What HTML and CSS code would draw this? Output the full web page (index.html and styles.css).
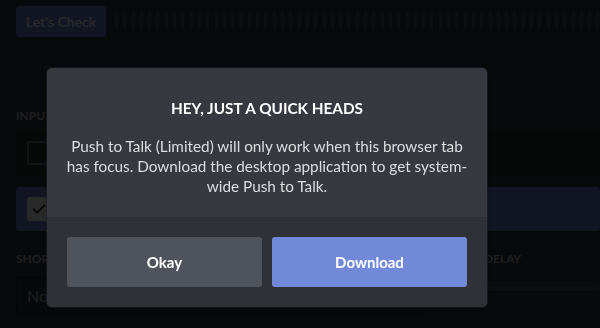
FILE: index.html
```html
<!DOCTYPE html>
<html lang="en">
<head>
<meta charset="utf-8">
<title>Voice Settings</title>
<link rel="stylesheet" href="styles.css">
</head>
<body>
<div class="page">
  <div class="top-row">
    <button class="check-btn">Let's Check</button>
    <div class="meter"></div>
  </div>
  <div class="section-label input-label">Input Mode</div>
  <div class="radio-row">
    <span class="checkbox"></span>
  </div>
  <div class="radio-row selected">
    <span class="checkbox checked">
      <svg viewBox="0 0 24 24" width="18" height="18"><path d="M5 12.5l4.5 4.5L19 7.5" fill="none" stroke="#2f3136" stroke-width="2.6" stroke-linecap="round" stroke-linejoin="round"/></svg>
    </span>
  </div>
  <div class="cols">
    <div class="col">
      <div class="section-label">Shortcut</div>
      <div class="shortcut-box">No Keybind Set</div>
    </div>
    <div class="col">
      <div class="section-label">Input Delay</div>
      <div class="slider-track"></div>
    </div>
  </div>
</div>

<div class="overlay">
  <div class="modal">
    <div class="modal-body">
      <h2 class="modal-title">Hey, just a quick heads</h2>
      <p class="modal-text">Push to Talk (Limited) will only work when this browser tab has focus. Download the desktop application to get system-wide Push to Talk.</p>
    </div>
    <div class="modal-footer">
      <button class="btn btn-okay">Okay</button>
      <button class="btn btn-download">Download</button>
    </div>
  </div>
</div>
</body>
</html>
```

FILE: styles.css
```css
html, body {
  margin: 0;
  padding: 0;
  height: 100%;
  overflow: hidden;
}
body {
  background: #36393f;
  font-family: Lato, "Noto Sans", "Liberation Sans", sans-serif;
  color: #dcddde;
}
.page {
  padding: 6px 0 0 16px;
}
.top-row {
  display: flex;
  align-items: center;
  gap: 9px;
}
.check-btn {
  width: 90px;
  height: 31px;
  border: none;
  border-radius: 3px;
  background: #7289da;
  color: #fff;
  font-family: inherit;
  font-size: 14px;
  font-weight: 600;
  padding: 0;
}
.meter {
  flex: 1;
  height: 17px;
  background: repeating-linear-gradient(90deg, #4f545c 0 3px, transparent 3px 8.3px);
}
.section-label {
  font-size: 12px;
  font-weight: 700;
  text-transform: uppercase;
  color: #b9bbbe;
  line-height: 16px;
}
.input-label {
  margin-top: 71px;
  margin-bottom: 7px;
}
.radio-row {
  display: flex;
  align-items: center;
  height: 44px;
  padding: 0 11px;
  border-radius: 3px;
  background: #2f3136;
  margin-bottom: 12px;
}
.radio-row.selected {
  background: #7289da;
}
.checkbox {
  width: 20px;
  height: 20px;
  border: 2px solid #72767d;
  border-radius: 3px;
  display: flex;
  align-items: center;
  justify-content: center;
}
.checkbox.checked {
  background: #fff;
  border-color: #fff;
}
.cols {
  display: grid;
  grid-template-columns: 409px 1fr;
  column-gap: 20px;
  margin-top: 20px;
}
.col .section-label {
  margin-bottom: 10px;
}
.shortcut-box {
  height: 35px;
  border: 1px solid #202225;
  border-radius: 3px;
  background: #303339;
  padding-left: 10px;
  display: flex;
  align-items: center;
  font-size: 16px;
  color: #b9bbbe;
}
.slider-track {
  margin-top: 15px;
  height: 9px;
  border-radius: 4px;
  background: #4f545c;
}

.overlay {
  position: fixed;
  inset: 0;
  background: rgba(0, 0, 0, 0.84);
  padding: 68px 0 0 47px;
  box-sizing: border-box;
}
.modal {
  width: 440px;
  border-radius: 5px;
  overflow: hidden;
  background: #36393f;
  box-shadow: 0 0 0 1px rgba(32, 34, 37, 0.6), 0 2px 10px 0 rgba(0, 0, 0, 0.2);
}
.modal-body {
  padding: 30px 16px 21px;
  text-align: center;
}
.modal-title {
  margin: 0 0 18px;
  font-size: 15.3px;
  line-height: 20px;
  font-weight: 700;
  text-transform: uppercase;
  color: #fff;
}
.modal-text {
  margin: 0;
  font-size: 15.3px;
  line-height: 20px;
  color: #dcddde;
}
.modal-footer {
  background: #2f3136;
  padding: 20px;
  display: flex;
  gap: 10px;
}
.btn {
  flex: 1;
  height: 50px;
  border: none;
  border-radius: 3px;
  font-family: inherit;
  font-size: 15px;
  font-weight: 700;
  color: #fff;
  padding: 0;
}
.btn-okay {
  background: #4f545c;
}
.btn-download {
  background: #7289da;
}
```
